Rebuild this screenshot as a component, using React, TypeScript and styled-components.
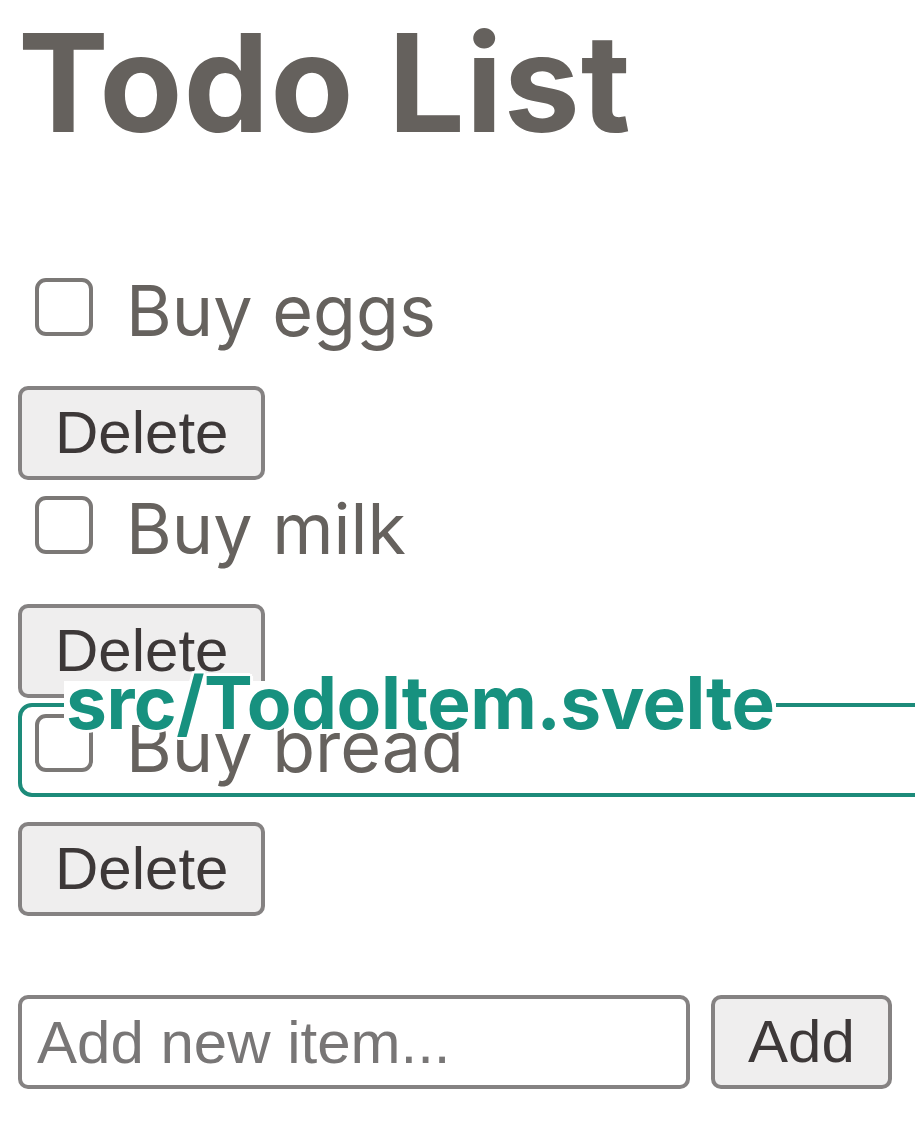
import React from "react";
import styled, { createGlobalStyle } from "styled-components";

const GlobalStyle = createGlobalStyle`
  html, body {
    margin: 0;
    padding: 0;
    background: #ffffff;
    overflow-x: hidden;
  }
  body {
    font-family: Inter, "Noto Sans", sans-serif;
  }
`;

const Page = styled.main`
  padding: 0 0 0 18px;
  width: 915px;
  box-sizing: border-box;
  overflow: hidden;
`;

const Title = styled.h1`
  margin: 0;
  padding-top: 15px;
  height: 139px;
  font-family: Inter, sans-serif;
  font-weight: 700;
  font-size: 136px;
  line-height: 136px;
  letter-spacing: 1px;
  color: #65615d;
`;

const List = styled.ul`
  list-style: none;
  margin: 108px 0 0 0;
  padding: 0;
`;

const Item = styled.li`
  display: flex;
  flex-direction: column;
  align-items: flex-start;
`;

const Row = styled.div`
  position: relative;
  display: flex;
  align-items: flex-start;
  height: 98px;
  width: 100%;
  margin-bottom: 26px;
`;

const Check = styled.span`
  display: block;
  box-sizing: border-box;
  width: 58px;
  height: 58px;
  margin: 16px 0 0 17px;
  border: 4px solid #7b7876;
  border-radius: 11px;
  background: #fff;
  flex: none;
`;

const ItemText = styled.span`
  margin: 14px 0 0 33px;
  font-family: Inter, sans-serif;
  font-size: 70px;
  line-height: 70px;
  color: #66625e;
`;

const Frame = styled.div`
  position: absolute;
  top: 5px;
  left: 0;
  right: -60px;
  bottom: -1px;
  border: 4px solid #1d8b7a;
  border-radius: 14px;
  pointer-events: none;
`;

const FrameLabel = styled.span`
  position: absolute;
  top: -26px;
  left: 42px;
  display: inline-block;
  height: 44px;
  padding: 0 2px;
  background: #fff;
  font-family: Inter, sans-serif;
  font-weight: 700;
  font-size: 73px;
  line-height: 44px;
  letter-spacing: -0.5px;
  color: #17917f;
  white-space: nowrap;
  text-shadow: 3px 0 #fff, -3px 0 #fff, 0 3px #fff, 0 -3px #fff,
    2px 2px #fff, -2px -2px #fff, 2px -2px #fff, -2px 2px #fff;
`;

const Button = styled.button`
  box-sizing: border-box;
  height: 94px;
  padding: 0 33px;
  border: 4px solid #858282;
  border-radius: 10px;
  background: #efeeee;
  font-family: "Liberation Sans", Arial, sans-serif;
  font-size: 60px;
  line-height: 1;
  color: #3d3838;
  flex: none;
`;

const Form = styled.form`
  display: flex;
  gap: 21px;
  margin-top: 79px;
`;

const Input = styled.input`
  box-sizing: border-box;
  width: 672px;
  height: 94px;
  padding: 0 15px;
  border: 4px solid #858282;
  border-radius: 10px;
  background: #fff;
  font-family: "Liberation Sans", Arial, sans-serif;
  font-size: 60px;
  color: #3d3838;
  outline: none;
  &::placeholder {
    color: #787676;
  }
`;

const todos = [
  { text: "Buy eggs", highlight: false },
  { text: "Buy milk", highlight: false },
  { text: "Buy bread", highlight: true },
];

export default function App() {
  return (
    <>
      <GlobalStyle />
      <Page>
        <Title>Todo List</Title>
        <List>
          {todos.map((t) => (
            <Item key={t.text}>
              <Row>
                <Check />
                <ItemText>{t.text}</ItemText>
                {t.highlight && (
                  <Frame>
                    <FrameLabel>src/TodoItem.svelte</FrameLabel>
                  </Frame>
                )}
              </Row>
              <Button type="button">Delete</Button>
            </Item>
          ))}
        </List>
        <Form onSubmit={(e) => e.preventDefault()}>
          <Input placeholder="Add new item..." />
          <Button type="submit">Add</Button>
        </Form>
      </Page>
    </>
  );
}
